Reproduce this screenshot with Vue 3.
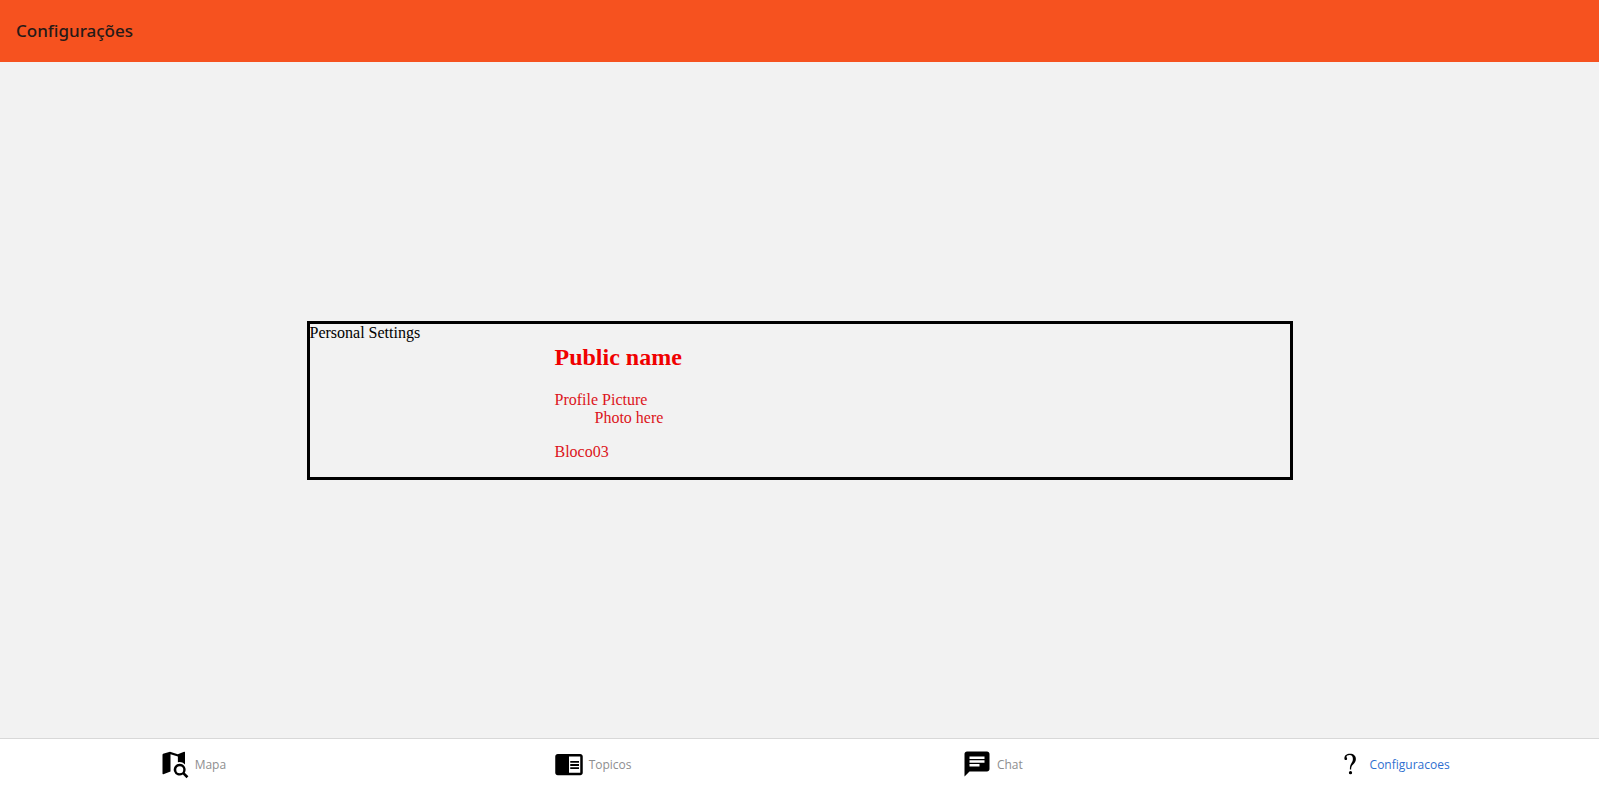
<script setup>
const tabs = [
  { id: 'mapa', label: 'Mapa' },
  { id: 'topicos', label: 'Topicos' },
  { id: 'chat', label: 'Chat' },
  { id: 'config', label: 'Configuracoes', active: true },
]
</script>

<template>
  <div class="screen">
    <header class="header">
      <h1 class="title">Configurações</h1>
    </header>

    <main class="content">
      <section class="settings">
        <div class="side">Personal Settings</div>
        <div class="details">
          <h2>Public name</h2>
          <dl>
            <dt>Profile Picture</dt>
            <dd>Photo here</dd>
          </dl>
          <p>Bloco03</p>
        </div>
      </section>
    </main>

    <nav class="tabs">
      <a v-for="tab in tabs" :key="tab.id" :href="'#' + tab.id" class="tab" :class="{ active: tab.active }">
        <svg class="icon" viewBox="0 0 24 24" aria-hidden="true">
          <path v-if="tab.id === 'mapa'" fill-rule="evenodd" d="M2 4.600Q2 4 2.500 3.800L8 2.200L14.200 4.200L19.300 2.200Q20 2 20 2.800V12.300A6 6 0 0 0 14.300 10.600V6L8.400 4.200V18L2.700 20.100Q2 20.300 2 19.600ZM15.800 11.800A4.700 4.700 0 0 1 19.800 18.900L22.700 21.800L21.200 23.300L18.300 20.400A4.700 4.700 0 1 1 15.800 11.800ZM15.800 13.700A2.800 2.800 0 1 0 15.800 19.300A2.800 2.800 0 0 0 15.800 13.700Z" />
          <path v-else-if="tab.id === 'topicos'" d="M13 12h7v1.500h-7zm0-2.500h7V11h-7zm0 5h7V16h-7zM21 4H3c-1.100 0-2 .9-2 2v13c0 1.100.9 2 2 2h18c1.100 0 2-.9 2-2V6c0-1.100-.9-2-2-2zm0 15h-9V6h9v13z" />
          <path v-else-if="tab.id === 'chat'" d="M20 2H4c-1.100 0-1.990.9-1.990 2L2 22l4-4h14c1.100 0 2-.9 2-2V4c0-1.100-.9-2-2-2zM6 9h12v2H6V9zm8 5H6v-2h8v2zm4-6H6V6h12v2z" />
          <path v-else d="M7.500 7.600C7.500 5.100 9.300 3.800 12 3.800C14.900 3.800 16.700 5.400 16.700 8C16.700 9.900 15.800 11.100 14.500 12.300C13.200 13.500 12.900 14.300 12.900 16.300H11.900C11.900 13.900 12.200 12.800 13 11.500C13.900 10.200 14.300 9.300 14.300 7.900C14.300 6 13.400 4.800 11.700 4.800C10.300 4.800 9.200 5.400 9.200 6.200C9.200 6.800 9.700 7.100 9.700 7.800C9.700 8.400 9.300 8.800 8.700 8.800C8 8.800 7.500 8.400 7.500 7.600ZM12.400 17.600A1.300 1.300 0 1 1 12.400 20.200A1.300 1.300 0 0 1 12.400 17.600Z" />
        </svg>
        <span class="label">{{ tab.label }}</span>
      </a>
    </nav>
  </div>
</template>

<style>
body {
  margin: 0;
}
</style>

<style scoped>
.screen {
  display: flex;
  flex-direction: column;
  min-height: 100vh;
  background: #f2f2f2;
  color: #000;
  font-family: "Liberation Serif", "Times New Roman", serif;
  font-size: 16px;
}

.header {
  display: flex;
  align-items: center;
  height: 62px;
  padding: 0 16px;
  background: #f6521f;
}

.title {
  margin: 0;
  color: #251a18;
  font: 500 17px/24px "Noto Sans", "Open Sans", sans-serif;
}

.content {
  flex: 1;
  display: flex;
  flex-direction: column;
  align-items: center;
  justify-content: center;
}

.settings {
  display: grid;
  grid-template-columns: 1fr 3fr;
  box-sizing: border-box;
  width: calc(100% - 613px);
  min-width: 320px;
  border: 3px solid #000;
  line-height: 18px;
}

.details {
  color: #dc1420;
}

.details h2 {
  margin: 20px 0;
  color: #f00000;
  font-size: 24px;
  line-height: 27px;
}

.details dl {
  margin: 0 0 16px;
}

.details dd {
  margin: 0 0 0 40px;
}

.details p {
  margin: 0 0 16px;
}

.tabs {
  display: flex;
  height: 49px;
  border-top: 1px solid #d8d8d8;
  background: #fff;
}

.tab {
  flex: 1;
  display: flex;
  align-items: center;
  justify-content: center;
  gap: 5px;
  padding-right: 14px;
  color: #8e8e8f;
  font: 12px/18px "Open Sans", "Noto Sans", sans-serif;
  text-decoration: none;
}

.tab.active {
  color: #2f6fd0;
}

.label {
  padding-top: 2px;
}

.icon {
  width: 30px;
  height: 30px;
  fill: #000;
}
</style>
